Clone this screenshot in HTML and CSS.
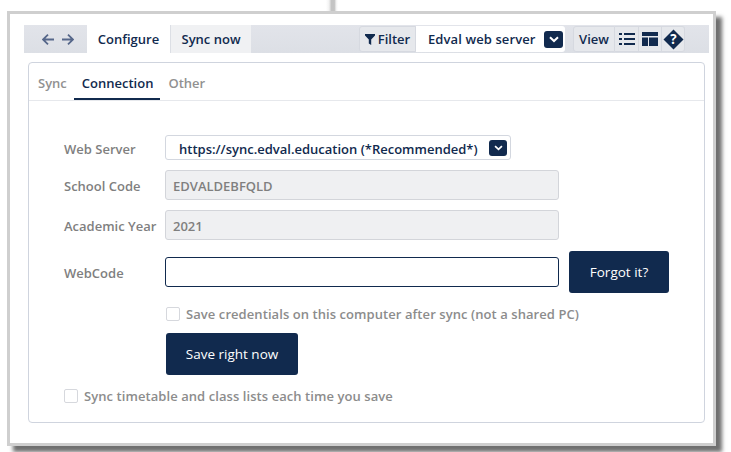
FILE: index.html
```html
<!DOCTYPE html>
<html lang="en">
<head>
<meta charset="utf-8">
<title>Edval web server</title>
<link rel="stylesheet" href="styles.css">
</head>
<body>
<div class="stub"></div>
<main class="frame">
  <header class="toolbar">
    <div class="nav">
      <svg class="arrow" viewBox="0 0 12 11" width="12" height="11"><path d="M6 .7 1 5.500l5 4.800M1 5.500h11" fill="none" stroke="#56678a" stroke-width="1.800"/></svg>
      <svg class="arrow" viewBox="0 0 12 11" width="12" height="11"><path d="M6 .7l5 4.800-5 4.800M11 5.500H0" fill="none" stroke="#56678a" stroke-width="1.800"/></svg>
    </div>
    <div class="tab tab-active">Configure</div>
    <div class="tab tab-idle">Sync now</div>
    <div class="spacer"></div>
    <div class="tool filter">
      <svg viewBox="0 0 10 11" width="10" height="11"><path d="M0 0h10v1.400L6.200 5.600V11L3.800 9.600v-4L0 1.400z" fill="#112a4e"/></svg>
      <span>Filter</span>
    </div>
    <div class="picker">
      <span>Edval web server</span>
      <span class="chev chev-lg"><svg viewBox="0 0 10 7" width="10" height="7"><path d="M1 1.200 5 5l4-3.800" fill="none" stroke="#fff" stroke-width="2"/></svg></span>
    </div>
    <div class="tool view">View</div>
    <div class="tool icon icon-wide">
      <svg viewBox="0 0 16 14" width="16" height="14"><path d="M0 1h3v2H0zM5 1h11v2H5zM0 6h3v2H0zM5 6h11v2H5zM0 11h3v2H0zM5 11h11v2H5z" fill="#112a4e"/></svg>
    </div>
    <div class="tool icon">
      <svg viewBox="0 0 16 14" width="16" height="14"><path d="M0 0h16v4H0zM0 5.500h6V14H0zM7 5.500h9V14H7z" fill="#112a4e"/></svg>
    </div>
    <div class="tool icon help">
      <svg viewBox="0 0 22 22" width="21" height="21"><path d="M11 .5 21.500 11 11 21.500.5 11z" fill="#112a4e"/><text x="11" y="15.500" text-anchor="middle" class="q">?</text></svg>
    </div>
  </header>

  <section class="card">
    <nav class="subtabs">
      <span class="subtab subtab-first">Sync</span>
      <span class="subtab subtab-active">Connection</span>
      <span class="subtab">Other</span>
    </nav>
    <div class="form">
      <div class="row row-server">
        <label class="label">Web Server</label>
        <div class="select">
          <span class="select-text">https://sync.edval.education (*Recommended*)</span>
          <span class="chev"><svg viewBox="0 0 10 7" width="9" height="6"><path d="M1 1.200 5 5l4-3.800" fill="none" stroke="#fff" stroke-width="2"/></svg></span>
        </div>
      </div>
      <div class="row row-school">
        <label class="label">School Code</label>
        <div class="input input-disabled">EDVALDEBFQLD</div>
      </div>
      <div class="row row-year">
        <label class="label">Academic Year</label>
        <div class="input input-disabled">2021</div>
      </div>
      <div class="row row-code">
        <label class="label">WebCode</label>
        <div class="input input-focus"></div>
        <button class="btn btn-forgot">Forgot it?</button>
      </div>
      <div class="check check-inner">
        <span class="box"></span>
        <span>Save credentials on this computer after sync (not a shared PC)</span>
      </div>
      <button class="btn btn-save">Save right now</button>
      <div class="check check-outer">
        <span class="box"></span>
        <span>Sync timetable and class lists each time you save</span>
      </div>
    </div>
  </section>
</main>
</body>
</html>
```
FILE: styles.css
```css
* { box-sizing: border-box; }
html, body { margin: 0; height: 100%; background: #fff; overflow: hidden; }
body {
  font-family: "Open Sans", "Noto Sans", sans-serif;
  font-size: 13px;
  color: #112a4e;
  padding: 11px 0 0 7px;
}
.stub {
  position: absolute;
  left: 326px;
  top: 0;
  width: 12px;
  height: 11px;
  background: linear-gradient(90deg, #fff, #f2f2f2 25%, #c4c4c4 45%, #c4c4c4 70%, #f2f2f2 85%, #fff);
}
.frame {
  width: 709px;
  height: 435px;
  border: 3px solid #cfcfcf;
  background: #fff;
  box-shadow: 6px 6px 4px #6f6f6f;
  padding: 11px 4px 0 14px;
}
.toolbar {
  display: flex;
  align-items: stretch;
  height: 28px;
  background: linear-gradient(#e2e4ea, #dcdfe5);
}
.nav {
  width: 63px;
  display: flex;
  align-items: center;
  gap: 8px;
  padding: 0 0 0 18px;
}
.tab {
  display: flex;
  align-items: center;
  justify-content: center;
  font-weight: 600;
  font-size: 13px;
}
.tab-active { width: 83px; background: #fff; }
.tab-idle { width: 81px; background: #f0f1f3; border-left: 1px solid #dcdfe5; }
.spacer { flex: 1; }
.tool {
  display: flex;
  align-items: center;
  justify-content: center;
  background: #e6e8ec;
  border: 1px solid #d6d9e0;
  font-weight: 600;
  margin: 1px 0;
}
.filter { width: 57px; gap: 3px; border-radius: 3px 0 0 3px; }
.picker {
  width: 149px;
  margin: 1px 8px 1px 0;
  display: flex;
  align-items: center;
  justify-content: space-between;
  padding: 0 2px 0 12px;
  background: #fff;
  border-radius: 0 3px 3px 0;
  font-weight: 600;
  letter-spacing: .1px;
}
.view { width: 42px; border-radius: 3px 0 0 3px; }
.icon { width: 23px; border-left: 0; }
.icon-wide { width: 24px; }
.help { width: 23px; border-radius: 0 3px 3px 0; margin-right: 24px; padding-left: 1px; }
.q { fill: #fff; font: 700 14px "Open Sans", sans-serif; }
.chev {
  width: 18px;
  height: 16px;
  border-radius: 3px;
  background: #112a4e;
  display: flex;
  align-items: center;
  justify-content: center;
  flex: none;
}
.chev-lg { width: 19px; height: 17px; }
.card {
  margin: 9px 4px 0 4px;
  height: 361px;
  border: 1px solid #cfd4de;
  border-radius: 4px;
}
.subtabs {
  display: flex;
  height: 38px;
  border-bottom: 1px solid #e6e8ec;
  padding-left: 2px;
  font-weight: 600;
  color: #919191;
}
.subtab {
  padding: 0 7px;
  height: 37px;
  line-height: 40px;
}
.subtab-first { padding-right: 7.500px; }
.subtab-active { color: #112a4e; border-bottom: 2px solid #112a4e; padding: 0 7px 0 7.500px; margin-right: 1px; }
.form {
  padding: 34px 0 0 35px;
  display: flex;
  flex-direction: column;
  align-items: flex-start;
  font-weight: 600;
  color: #7f7f7f;
}
.row { display: flex; align-items: center; }
.label { width: 101px; flex: none; padding-top: 2px; }
.select {
  width: 346px;
  height: 25px;
  border: 1px solid #d3d7df;
  border-radius: 3px;
  display: flex;
  align-items: center;
  justify-content: space-between;
  padding: 0 3px 0 13px;
  color: #112a4e;
}
.select-text { padding-top: 2px; }
.input {
  width: 394px;
  height: 30px;
  border-radius: 3px;
  padding: 2px 7px 0;
  display: flex;
  align-items: center;
}
.input-disabled { background: #eff0f2; border: 1px solid #d3d5da; }
.input-focus { background: #fff; border: 1px solid #112a4e; }
.row-school { margin-top: 10px; }
.row-year { margin-top: 10px; }
.row-code { margin-top: 11px; }
.btn {
  border: 0;
  border-radius: 3px;
  background: #112a4e;
  color: #fff;
  font: 400 13.500px "Open Sans", "Noto Sans", sans-serif;
}
.btn-forgot { width: 100px; height: 42px; margin-left: 10px; }
.btn-save { width: 132px; height: 42px; margin: 10px 0 0 102px; }
.check { display: flex; align-items: center; gap: 6px; letter-spacing: .07px; }
.box {
  width: 14px;
  height: 14px;
  border: 1px solid #d6d8dd;
  border-radius: 2px;
  background: #fff;
}
.check-inner { margin: 12px 0 0 102px; color: #8c8c8c; }
.check-outer { margin: 12px 0 0 0; color: #8c8c8c; }
```
